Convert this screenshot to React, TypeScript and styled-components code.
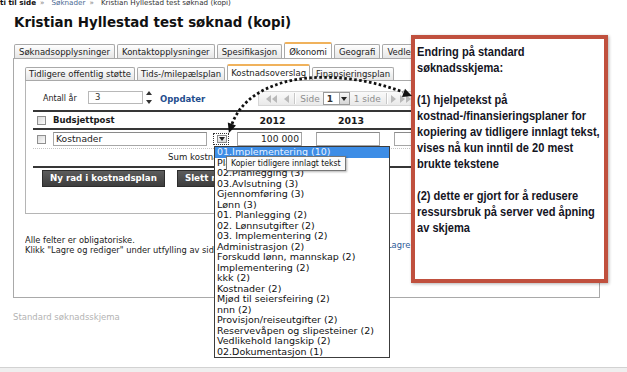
import React from 'react';
import styled, { createGlobalStyle } from 'styled-components';

const GlobalStyle = createGlobalStyle`
  html, body {
    margin: 0;
    padding: 0;
    background: #fff;
  }
  body {
    font-family: "DejaVu Sans", Verdana, sans-serif;
    color: #222;
    overflow: hidden;
  }
  * {
    box-sizing: border-box;
  }
`;

const Page = styled.div`
  position: relative;
  width: 627px;
  height: 372px;
  overflow: hidden;
  display: flex;
  flex-direction: column;
`;

const Crumbs = styled.div`
  flex: none;
  height: 7px;
  overflow: hidden;
`;
const CrumbLine = styled.div`
  margin-top: -2px;
  display: flex;
  font-size: 7.2px;
  line-height: 9px;
  white-space: nowrap;
`;
const CrumbItem = styled.span<{ $kind: 'back' | 'link' | 'current' }>`
  font-weight: ${(p) => (p.$kind === 'back' ? 'bold' : 'normal')};
  color: ${(p) =>
    p.$kind === 'link' ? '#4b6a93' : p.$kind === 'back' ? '#111' : '#333'};
`;
const CrumbSep = styled.span`
  color: #888;
  margin: 0 7px 0 4px;
`;

const Title = styled.h1`
  flex: none;
  margin: 8px 0 0 14px;
  font-size: 13.4px;
  line-height: 16px;
  font-weight: bold;
  color: #111;
  white-space: nowrap;
`;

const Panel = styled.section`
  flex: none;
  margin: 11px 0 0 13px;
  width: 587px;
`;

const TabRow = styled.div<{ $indent: number }>`
  display: flex;
  align-items: flex-end;
  gap: 2px;
  height: 17px;
  padding-left: ${(p) => p.$indent}px;
  border-bottom: 1px solid #a9a9a9;
  overflow: hidden;
`;

const Tab = styled.div<{ $active?: boolean; $sub?: boolean }>`
  flex: none;
  height: ${(p) => (p.$active ? 17 : p.$sub ? 13 : 14)}px;
  margin-bottom: ${(p) => (p.$active ? -1 : 0)}px;
  padding: ${(p) => (p.$active ? 2 : 1)}px ${(p) => (p.$sub ? 3 : 4)}px 0;
  border: 1px solid #a9a9a9;
  border-top: ${(p) => (p.$active ? '2px solid #f0b25c' : '1px solid #a9a9a9')};
  border-bottom: ${(p) => (p.$active ? '1px solid #fff' : 'none')};
  border-radius: 2px 2px 0 0;
  background: ${(p) =>
    p.$active ? '#fff' : 'linear-gradient(#fefefe, #e6e6e6)'};
  font-size: 8.5px;
  line-height: ${(p) => (p.$sub ? 11 : 12)}px;
  color: #222;
  white-space: nowrap;
`;

const PanelBody = styled.div`
  height: 239px;
  border: 1px solid #a9a9a9;
  border-top: none;
  padding: 5px 10px 0 11px;
`;

const InnerPanel = styled.div`
  height: 133px;
  border: 1px solid #b5b5b5;
  border-top: none;
  padding-top: 7px;
`;

const OptionsRow = styled.div`
  display: flex;
  align-items: center;
  height: 18px;
  padding-left: 17px;
`;
const OptionLabel = styled.span`
  width: 45px;
  padding-top: 4px;
  font-size: 8px;
  line-height: 10px;
  color: #222;
`;
const NumberBox = styled.div`
  width: 55px;
  height: 13px;
  border: 1px solid #b8b8b8;
  background: #fff;
  padding-left: 6px;
  font-size: 8.5px;
  line-height: 11px;
  color: #333;
`;
const Spinner = styled.svg`
  margin-left: 3px;
  flex: none;
`;
const UpdateLink = styled.span`
  margin-left: 8px;
  padding-top: 4px;
  font-size: 8.5px;
  line-height: 10px;
  font-weight: bold;
  color: #1f4d8e;
`;

const Pager = styled.div`
  align-self: flex-end;
  margin-left: 53px;
  width: 165px;
  height: 15px;
  display: flex;
  align-items: center;
  border: 1px solid #d6d6d6;
  background: linear-gradient(#fafafa, #e9e9e9);
  font-size: 9px;
  color: #8d8d8d;
  white-space: nowrap;
`;
const PagerPart = styled.span<{ $ml: number }>`
  flex: none;
  display: flex;
  align-items: center;
  margin-left: ${(p) => p.$ml}px;
`;
const PagerSep = styled.span<{ $ml: number }>`
  flex: none;
  width: 2px;
  height: 11px;
  margin-left: ${(p) => p.$ml}px;
  border-left: 1px solid #c8c8c8;
  border-right: 1px solid #fff;
`;
const PageSelect = styled.span`
  flex: none;
  display: flex;
  align-items: center;
  justify-content: space-between;
  width: 27px;
  height: 13px;
  margin-left: 3px;
  padding-left: 3px;
  border: 1px solid #9a9a9a;
  background: #fff;
  font-weight: bold;
  color: #333;
`;
const SelectButton = styled.span`
  width: 10px;
  height: 11px;
  display: flex;
  align-items: center;
  justify-content: center;
  border-left: 1px solid #aaa;
  background: linear-gradient(#f7f7f7, #d6d6d6);
`;

const Table = styled.div`
  margin: 4px 0 0 7px;
  border-top: 2px solid #363636;
`;
const cols = '17px 161px 22px 79px 78px 80px';
const HeadRow = styled.div`
  display: grid;
  grid-template-columns: ${cols};
  align-items: center;
  height: 18px;
  border-bottom: 2px solid #363636;
`;
const DataRow = styled.div`
  display: grid;
  grid-template-columns: ${cols};
  align-items: center;
  height: 19px;
  border-bottom: 1px dotted #c4c4c4;
`;
const SumRow = styled.div`
  display: flex;
  align-items: center;
  height: 19px;
  border-bottom: 2px solid #363636;
`;
const SumLabel = styled.span`
  padding-left: 135px;
  font-size: 8.6px;
  line-height: 11px;
  color: #222;
  white-space: nowrap;
`;
const HeadText = styled.span<{ $center?: boolean; $size: number }>`
  padding-left: ${(p) => (p.$center ? 0 : 3)}px;
  text-align: ${(p) => (p.$center ? 'center' : 'left')};
  font-size: ${(p) => p.$size}px;
  line-height: 11px;
  font-weight: bold;
  color: #1a1a1a;
`;
const Check = styled.span`
  width: 9px;
  height: 9px;
  margin-left: 4px;
  border: 1px solid #8f8f8f;
  background: linear-gradient(135deg, #d9d9d9, #fbfbfb);
`;
const Field = styled.div<{ $w: number; $right?: boolean }>`
  width: ${(p) => p.$w}px;
  height: 14px;
  margin-left: ${(p) => (p.$right ? 4 : 3)}px;
  padding: 0 2px;
  border: 1px solid #a6a6a6;
  border-top-color: #8a8a8a;
  background: #fff;
  text-align: ${(p) => (p.$right ? 'right' : 'left')};
  font-size: 9.2px;
  line-height: 12px;
  color: #222;
  white-space: nowrap;
`;
const PickButton = styled.span`
  width: 16px;
  height: 12px;
  margin-left: 2px;
  display: flex;
  align-items: center;
  justify-content: flex-end;
  padding-right: 1px;
  border: 1px dotted #333;
`;
const PickArrow = styled.span`
  width: 10px;
  height: 8px;
  display: flex;
  align-items: center;
  justify-content: center;
  border: 1px solid #8a8a8a;
  background: linear-gradient(#fdfdfd, #d9d9d9);
`;

const ButtonRow = styled.div`
  display: flex;
  gap: 12px;
  margin-top: 2px;
  padding-left: 9px;
`;
const DarkButton = styled.span`
  flex: none;
  height: 17px;
  padding: 0 7px;
  border: 1px solid #2c2c2c;
  background: linear-gradient(#5c5c5c, #3d3d3d);
  color: #fff;
  font-size: 8.7px;
  line-height: 15px;
  font-weight: bold;
  white-space: nowrap;
`;

const Notes = styled.div`
  display: grid;
  grid-template-columns: 362px auto;
  margin-top: 22px;
  font-size: 8.3px;
  line-height: 9.5px;
  color: #222;
`;
const NoteLines = styled.div`
  white-space: nowrap;
  overflow: hidden;
`;
const SaveLink = styled.span`
  align-self: center;
  color: #2d5b98;
  white-space: nowrap;
`;

const Footer = styled.div`
  flex: none;
  margin: 14px 0 0 13px;
  font-size: 8.5px;
  line-height: 10px;
  color: #b3b3b3;
`;

const BottomBar = styled.div`
  flex: none;
  margin-top: auto;
  height: 5px;
  border-top: 1px solid #d2d2d2;
  background: #efefef;
`;

const DropList = styled.ul`
  position: absolute;
  left: 214px;
  top: 146px;
  width: 176px;
  margin: 0;
  padding: 0;
  list-style: none;
  border: 1px solid #3c3c3c;
  background: #fff;
  font-size: 9.5px;
  line-height: 10.5px;
`;
const DropItem = styled.li<{ $selected?: boolean }>`
  height: 10.5px;
  padding-left: 2px;
  white-space: nowrap;
  color: ${(p) => (p.$selected ? '#e6f0ff' : '#111')};
  background: ${(p) => (p.$selected ? '#3d8de6' : 'transparent')};
`;

const Tip = styled.div`
  position: absolute;
  left: 226px;
  top: 156px;
  height: 15px;
  padding: 0 4px;
  border: 1px solid #767676;
  background: #fbfbfb;
  box-shadow: 1px 1px 2px rgba(0, 0, 0, 0.3);
  font-family: "DejaVu Sans Condensed", "DejaVu Sans", sans-serif;
  font-size: 8.6px;
  line-height: 13px;
  color: #111;
  white-space: nowrap;
`;

const Annotation = styled.aside`
  position: absolute;
  left: 411px;
  top: 35px;
  width: 197px;
  height: 248px;
  padding: 5px 0 0 2px;
  border: 4px solid #c0503e;
  background: #fff;
  box-shadow: 1px 1px 3px rgba(0, 0, 0, 0.3);
  overflow: hidden;
`;
/* no narrow Arial installed: squeeze Liberation Sans Bold to Arial Narrow widths */
const AnnotationText = styled.div`
  width: 230px;
  transform: scaleX(0.82);
  transform-origin: 0 0;
  font-family: "Liberation Sans", Arial, sans-serif;
  font-weight: bold;
  font-size: 13.5px;
  line-height: 16px;
  color: #15151f;
  white-space: nowrap;
`;
const AnnotationPara = styled.p`
  margin: 0 0 16px;
`;

const Curve = styled.svg`
  position: absolute;
  left: 220px;
  top: 70px;
`;

const mainTabs = [
  'Søknadsopplysninger',
  'Kontaktopplysninger',
  'Spesifikasjon',
  'Økonomi',
  'Geografi',
  'Vedlegg',
  'Send inn',
];
const subTabs = [
  'Tidligere offentlig støtte',
  'Tids-/milepælsplan',
  'Kostnadsoverslag',
  'Finansieringsplan',
];
const years = ['2012', '2013', '2014'];

const suggestions = [
  '01.Implementering (10)',
  'Planlegging (4)',
  '02.Planlegging (3)',
  '03.Avlsutning (3)',
  'Gjennomføring (3)',
  'Lønn (3)',
  '01. Planlegging (2)',
  '02. Lønnsutgifter (2)',
  '03. Implementering (2)',
  'Administrasjon (2)',
  'Forskudd lønn, mannskap (2)',
  'Implementering (2)',
  'kkk (2)',
  'Kostnader (2)',
  'Mjød til seiersfeiring (2)',
  'nnn (2)',
  'Provisjon/reiseutgifter (2)',
  'Reservevåpen og slipesteiner (2)',
  'Vedlikehold langskip (2)',
  '02.Dokumentasjon (1)',
];

function Caret({ color = '#222' }: { color?: string }) {
  return (
    <svg width="6" height="4" viewBox="0 0 6 4">
      <polygon points="0,0 6,0 3,4" fill={color} />
    </svg>
  );
}

function PageArrow({ dir, double }: { dir: 'left' | 'right'; double?: boolean }) {
  const one = (x: number) =>
    dir === 'left'
      ? `${x + 5},0 ${x},4 ${x + 5},8`
      : `${x},0 ${x + 5},4 ${x},8`;
  return (
    <svg width={double ? 12 : 5} height="8" viewBox={`0 0 ${double ? 12 : 5} 8`}>
      <polygon points={one(0)} fill="#b9b9b9" />
      {double && <polygon points={one(6)} fill="#b9b9b9" />}
    </svg>
  );
}

export default function App() {
  return (
    <Page>
      <GlobalStyle />
      <Crumbs>
        <CrumbLine>
          <CrumbItem $kind="back">ti til side</CrumbItem>
          <CrumbSep>»</CrumbSep>
          <CrumbItem $kind="link">Søknader</CrumbItem>
          <CrumbSep>»</CrumbSep>
          <CrumbItem $kind="current">Kristian Hyllestad test søknad (kopi)</CrumbItem>
        </CrumbLine>
      </Crumbs>

      <Title>Kristian Hyllestad test søknad (kopi)</Title>

      <Panel>
        <TabRow $indent={1}>
          {mainTabs.map((t) => (
            <Tab key={t} $active={t === 'Økonomi'}>
              {t}
            </Tab>
          ))}
        </TabRow>
        <PanelBody>
          <TabRow $indent={0}>
            {subTabs.map((t) => (
              <Tab key={t} $sub $active={t === 'Kostnadsoverslag'}>
                {t}
              </Tab>
            ))}
          </TabRow>
          <InnerPanel>
            <OptionsRow>
              <OptionLabel>Antall år</OptionLabel>
              <NumberBox>3</NumberBox>
              <Spinner width="6" height="13" viewBox="0 0 6 13">
                <polygon points="3,0 6,4 0,4" fill="#333" />
                <polygon points="0,9 6,9 3,13" fill="#333" />
              </Spinner>
              <UpdateLink>Oppdater</UpdateLink>
              <Pager>
                <PagerPart $ml={7}>
                  <PageArrow dir="left" double />
                </PagerPart>
                <PagerPart $ml={6}>
                  <PageArrow dir="left" />
                </PagerPart>
                <PagerSep $ml={5} />
                <PagerPart $ml={4}>Side</PagerPart>
                <PageSelect>
                  1
                  <SelectButton>
                    <Caret />
                  </SelectButton>
                </PageSelect>
                <PagerPart $ml={4}>1 side</PagerPart>
                <PagerSep $ml={5} />
                <PagerPart $ml={3}>
                  <PageArrow dir="right" />
                </PagerPart>
                <PagerPart $ml={4}>
                  <PageArrow dir="right" double />
                </PagerPart>
              </Pager>
            </OptionsRow>

            <Table>
              <HeadRow>
                <Check />
                <HeadText $size={8.5}>Budsjettpost</HeadText>
                <span />
                {years.map((y) => (
                  <HeadText key={y} $center $size={9.4}>
                    {y}
                  </HeadText>
                ))}
              </HeadRow>
              <DataRow>
                <Check />
                <Field $w={154}>Kostnader</Field>
                <PickButton>
                  <PickArrow>
                    <Caret />
                  </PickArrow>
                </PickButton>
                <Field $w={65} $right>
                  100 000
                </Field>
                <Field $w={64} $right />
                <Field $w={64} $right />
              </DataRow>
              <SumRow>
                <SumLabel>Sum kostnader</SumLabel>
              </SumRow>
              <ButtonRow>
                <DarkButton>Ny rad i kostnadsplan</DarkButton>
                <DarkButton>Slett rad i kostnadsplan</DarkButton>
              </ButtonRow>
            </Table>
          </InnerPanel>

          <Notes>
            <NoteLines>
              Alle felter er obligatoriske.
              <br />
              Klikk "Lagre og rediger" under utfylling av siden for å unngå tap av data.
            </NoteLines>
            <SaveLink>Lagre</SaveLink>
          </Notes>
        </PanelBody>
      </Panel>

      <Footer>Standard søknadsskjema</Footer>
      <BottomBar />

      <DropList>
        {suggestions.map((s, i) => (
          <DropItem key={s} $selected={i === 0}>
            {s}
          </DropItem>
        ))}
      </DropList>
      <Tip>Kopier tidligere innlagt tekst</Tip>

      <Annotation>
        <AnnotationText>
          <AnnotationPara>
            Endring på standard
            <br />
            søknadsskjema:
          </AnnotationPara>
          <AnnotationPara>
            (1) hjelpetekst på
            <br />
            kostnad-/finansieringsplaner for
            <br />
            kopiering av tidligere innlagt tekst,
            <br />
            vises nå kun inntil de 20 mest
            <br />
            brukte tekstene
          </AnnotationPara>
          <AnnotationPara>
            (2) dette er gjort for å redusere
            <br />
            ressursbruk på server ved åpning
            <br />
            av skjema
          </AnnotationPara>
        </AnnotationText>
      </Annotation>

      <Curve width="200" height="70" viewBox="220 70 200 70">
        <path
          d="M232 124 C250 75, 330 65, 403 92"
          fill="none"
          stroke="#111"
          strokeWidth="2.8"
          strokeDasharray="2.6 2.4"
        />
        <polygon points="228.9,133 236,125.4 227.8,122.4" fill="#111" />
        <polygon points="412,96 402,97 405,88.8" fill="#111" />
      </Curve>
    </Page>
  );
}
